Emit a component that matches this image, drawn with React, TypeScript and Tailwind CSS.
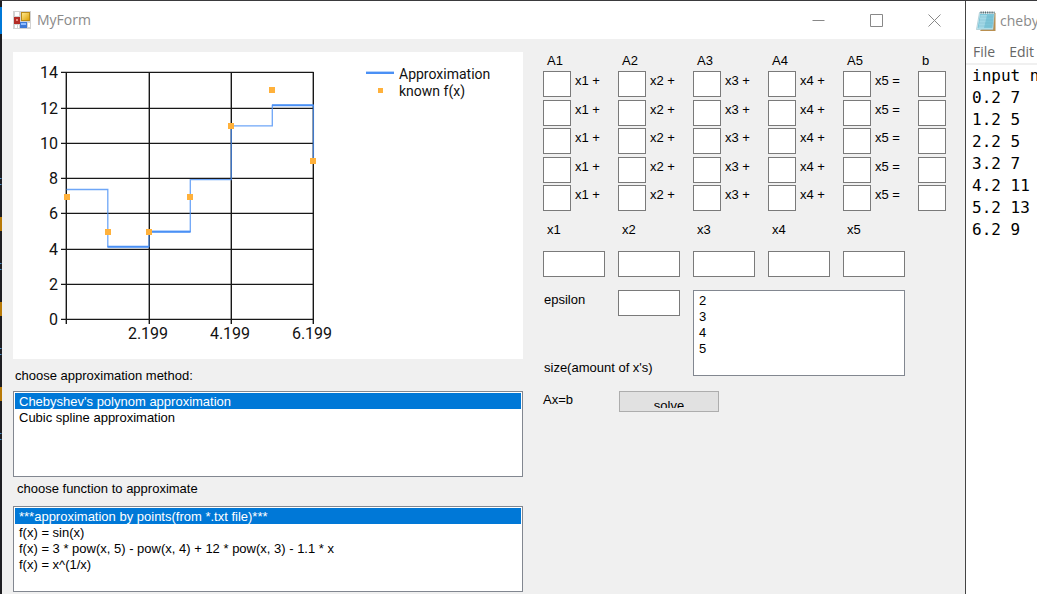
import React from "react";

const COLS = [1, 2, 3, 4, 5];
const ROWS = [1, 2, 3, 4, 5];
const METHODS = ["Chebyshev's polynom approximation", "Cubic spline approximation"];
const FUNCTIONS = [
  "***approximation by points(from *.txt file)***",
  "f(x) = sin(x)",
  "f(x) = 3 * pow(x, 5) - pow(x, 4) + 12 * pow(x, 3) - 1.1 * x",
  "f(x) = x^(1/x)",
];
const NOTE_LINES = ["input n", "0.2 7", "1.2 5", "2.2 5", "3.2 7", "4.2 11", "5.2 13", "6.2 9"];

const Y_TICKS = [
  { label: "14", y: 72 },
  { label: "12", y: 108 },
  { label: "10", y: 143 },
  { label: "8", y: 178 },
  { label: "6", y: 213 },
  { label: "4", y: 249 },
  { label: "2", y: 284 },
  { label: "0", y: 319 },
];
const X_TICKS = [
  { label: "", x: 66 },
  { label: "2.199", x: 149 },
  { label: "4.199", x: 231 },
  { label: "6.199", x: 313 },
];
const POINTS = [
  [67, 197],
  [108, 232],
  [149, 232],
  [190, 197],
  [231, 126],
  [272, 90],
  [313, 161],
];

function Chart() {
  return (
    <svg
      viewBox="13 52 510 307"
      preserveAspectRatio="xMinYMin meet"
      className="block h-[307px] w-full bg-white"
      role="img"
      aria-label="Approximation chart"
    >
      <g stroke="#000" strokeWidth="1.4" opacity="0.9">
        {Y_TICKS.map((t) => (
          <line key={t.y} x1="61" x2="313.5" y1={t.y + 0.4} y2={t.y + 0.4} />
        ))}
        {X_TICKS.map((t) => (
          <line key={t.x} x1={t.x + 0.3} x2={t.x + 0.3} y1="72" y2="324" />
        ))}
      </g>
      <g className="font-['Roboto',sans-serif] text-[16px]" fill="#111">
        {Y_TICKS.map((t) => (
          <text key={t.y} x="58" y={t.y + 6} textAnchor="end">
            {t.label}
          </text>
        ))}
        {X_TICKS.map((t) => (
          <text key={t.x} x={t.x - 1} y="339" textAnchor="middle">
            {t.label}
          </text>
        ))}
      </g>
      <g stroke="#4a90f5" fill="none">
        <path
          strokeWidth="1.3"
          opacity="0.8"
          d="M66.5 189.5H107.8V246.7H149V231.5H190.3V179.7H231.3V125.8H272.3V105.3H313.4V161"
        />
        <path strokeWidth="2" d="M107.5 246.7H149M149 231.7H190.5M272 105.3H313.5" />
        <path strokeWidth="2.4" d="M366 72.8H394" />
      </g>
      <g fill="#ffb13b">
        {POINTS.map(([x, y]) => (
          <rect key={x} x={x - 3} y={y - 3} width="6" height="6" />
        ))}
        <rect x="378" y="88" width="5" height="5" />
      </g>
      <g className="font-['Roboto',sans-serif] text-[14px]" fill="#111">
        <text x="399" y="79">Approximation</text>
        <text x="399" y="96">known f(x)</text>
      </g>
    </svg>
  );
}

function ListBox({
  id,
  items,
  selected,
}: {
  id: string;
  items: string[];
  selected?: string;
}) {
  return (
    <select
      id={id}
      size={5}
      defaultValue={selected}
      className="block h-[86px] w-full appearance-none overflow-hidden border border-[#828790] bg-white p-px text-black outline-none"
    >
      {items.map((item) => (
        <option
          key={item}
          value={item}
          className="block h-4 min-h-4 px-1 pt-px pb-0 checked:bg-[linear-gradient(#0078d7,#0078d7)] checked:[-webkit-text-fill-color:white]"
        >
          {item}
        </option>
      ))}
    </select>
  );
}

function Box({ label, id, className }: { label?: string; id?: string; className: string }) {
  return (
    <input
      id={id}
      type="text"
      aria-label={label}
      className={`block h-[26px] border border-[#7a7a7a] bg-white px-1 outline-none ${className}`}
    />
  );
}

function FormIcon() {
  return (
    <svg width="18" height="18" viewBox="0 0 18 18" aria-hidden="true">
      <defs>
        <linearGradient id="gold" x1="0" y1="0" x2="1" y2="1">
          <stop offset="0" stopColor="#ffe88a" />
          <stop offset="1" stopColor="#dda20c" />
        </linearGradient>
      </defs>
      <rect width="18" height="18" fill="#d2d2d2" />
      <rect x="2" y="1" width="4" height="4" fill="#fff" />
      <rect x="1" y="6" width="6" height="7" fill="#b32b25" />
      <rect x="3" y="8" width="2" height="2" fill="#ec8a80" />
      <rect x="8" y="1" width="9" height="9" fill="#b98a18" />
      <rect x="9" y="2" width="7" height="7" fill="url(#gold)" />
      <rect x="7" y="11" width="7" height="6" fill="#3d78d6" />
      <rect x="8" y="12" width="5" height="2" fill="#8fbcff" />
      <path d="M2 14h2v3H2zM5 14h1v3H5zM15 12h2v4h-2z" fill="#fff" />
    </svg>
  );
}

function NotepadIcon() {
  return (
    <svg width="20" height="21" viewBox="0 0 20 21" aria-hidden="true">
      <path d="M4 20 18 2h1.500v18z" fill="#b98f50" />
      <path d="M3.500 1.500H18.500L17 18.500H.5z" fill="#dff3f7" stroke="#8fb9c4" strokeWidth=".6" />
      <path d="M4 3H18L16.500 17.500H1.500z" fill="#7cc5d8" />
      <path d="M4.500 4H11L8 17H2.500z" fill="#a3d8e6" />
      <path d="M4 6h13M3.500 9h13.500M3 12h13.500M2.500 15h14" stroke="#68afc2" strokeWidth=".3" />
      <path d="M4.500 1.500H18.500" stroke="#59666b" strokeWidth="2" strokeDasharray="1.200 1" />
    </svg>
  );
}

function WindowButton({ label, d }: { label: string; d: string }) {
  return (
    <button type="button" aria-label={label} className="flex h-full w-[58px] items-center justify-center">
      <svg width="13" height="13" viewBox="0 0 13 13" fill="none" stroke="#888" aria-hidden="true">
        <path d={d} />
      </svg>
    </button>
  );
}

function TitleBar() {
  return (
    <header className="flex h-[38px] items-center bg-white pr-0.5 pl-[11px]">
      <FormIcon />
      <h1 className="ml-1.5 flex-1 font-['Open_Sans',sans-serif] text-[14px] leading-5 text-[#8a8a8a]">
        MyForm
      </h1>
      <WindowButton label="Minimize" d="M.5 6.500H12.500" />
      <WindowButton label="Maximize" d="M.5 .5H12.500V12.500H.5z" />
      <WindowButton label="Close" d="M.5 .5 12.500 12.500M12.500 .5 .5 12.500" />
    </header>
  );
}

function Solver() {
  return (
    <section className="w-[403px] shrink-0" aria-label="Linear system">
      <div className="flex h-[19px] pt-px">
        {COLS.map((c) => (
          <span key={c} className="w-[75px] pl-1">
            A{c}
          </span>
        ))}
        <span className="pl-1">b</span>
      </div>
      <div className="grid h-[140px] content-between">
        {ROWS.map((r) => (
          <div key={r} className="flex">
            {COLS.map((c) => (
              <label key={c} className="flex w-[75px] gap-1">
                <Box className="w-7" />
                <span className="pt-0.5">
                  x{c} {c === 5 ? "=" : "+"}
                </span>
              </label>
            ))}
            <Box className="w-7" label={`b, row ${r}`} />
          </div>
        ))}
      </div>
      <div className="flex pt-[11px]">
        {COLS.map((c) => (
          <div key={c} className="w-[75px]">
            <label htmlFor={`x${c}`} className="block h-[29px] pl-1">
              x{c}
            </label>
            <Box id={`x${c}`} className="w-[62px]" />
          </div>
        ))}
      </div>
      <div className="mt-[13px] flex">
        <div className="flex w-[150px] flex-col justify-between">
          <div className="flex">
            <label htmlFor="epsilon" className="w-[75px] pt-0.5 pl-px">
              epsilon
            </label>
            <Box id="epsilon" className="w-[62px]" />
          </div>
          <label htmlFor="size" className="pl-px">
            size(amount of x's)
          </label>
        </div>
        <div className="w-[212px]">
          <ListBox id="size" items={["2", "3", "4", "5"]} />
        </div>
      </div>
      <div className="mt-[15px] flex">
        <span className="w-[76px] pt-px">Ax=b</span>
        <button
          type="button"
          className="flex h-[21px] w-[100px] items-start justify-center border border-[#adadad] bg-[#e1e1e1]"
        >
          <span className="h-4 overflow-hidden pt-1.5">solve</span>
        </button>
      </div>
    </section>
  );
}

function Notepad() {
  return (
    <aside className="w-[72px] shrink-0 overflow-hidden border-l border-[#444] bg-white whitespace-nowrap">
      <div className="flex h-10 items-center gap-1 pl-[10px] font-['Open_Sans',sans-serif] text-[14px] text-[#8a8a8a]">
        <span className="shrink-0">
          <NotepadIcon />
        </span>
        <span>cheby</span>
      </div>
      <nav className="flex h-6 gap-[14px] border-b-2 border-[#f0f0f0] pl-[7px] font-['Open_Sans',sans-serif] text-[14px] leading-5 text-[#666]">
        <button type="button">File</button>
        <button type="button">Edit</button>
      </nav>
      <pre className="pl-[6px] font-['DejaVu_Sans_Mono',monospace] text-[16px] leading-[22px] text-black">
        {NOTE_LINES.join("\n")}
      </pre>
    </aside>
  );
}

function EditorEdge() {
  return (
    <div className="w-0.5 shrink-0 bg-[#1e1e22]">
      <svg width="2" height="440" viewBox="0 0 2 440" className="block" aria-hidden="true">
        <path d="M0 6h2v27H0z" fill="#0078d7" />
        <path d="M0 216h2v14H0zM0 301h2v14H0zM0 386h2v14H0z" fill="#b87a08" />
        <path
          d="M0 177h1.500v1H0zM0 183h1.500v1H0zM0 262h1.500v1H0zM0 268h1.500v1H0zM0 347h1.500v1H0zM0 353h1.500v1H0zM0 432h1.500v1H0zM0 438h1.500v1H0z"
          fill="#4a8fc8"
        />
      </svg>
    </div>
  );
}

export default function App() {
  return (
    <div className="flex min-h-screen overflow-hidden border-t border-[#3a3a3d] bg-white font-['Liberation_Sans',sans-serif] text-[13px] leading-4 text-black">
      <EditorEdge />
      <div className="flex min-w-0 flex-1 flex-col bg-[#f0f0f0]">
        <TitleBar />
        <main className="flex flex-1 gap-5 pt-[13px] pr-[19px] pl-[11px]">
          <section className="min-w-0 flex-1" aria-label="Approximation">
            <Chart />
            <label htmlFor="method" className="block h-8 pt-[9px] pl-[2px]">
              choose approximation method:
            </label>
            <ListBox id="method" items={METHODS} selected={METHODS[0]} />
            <label htmlFor="function" className="block h-[29px] pt-1 pl-1">
              choose function to approximate
            </label>
            <ListBox id="function" items={FUNCTIONS} selected={FUNCTIONS[0]} />
          </section>
          <Solver />
        </main>
      </div>
      <Notepad />
    </div>
  );
}
